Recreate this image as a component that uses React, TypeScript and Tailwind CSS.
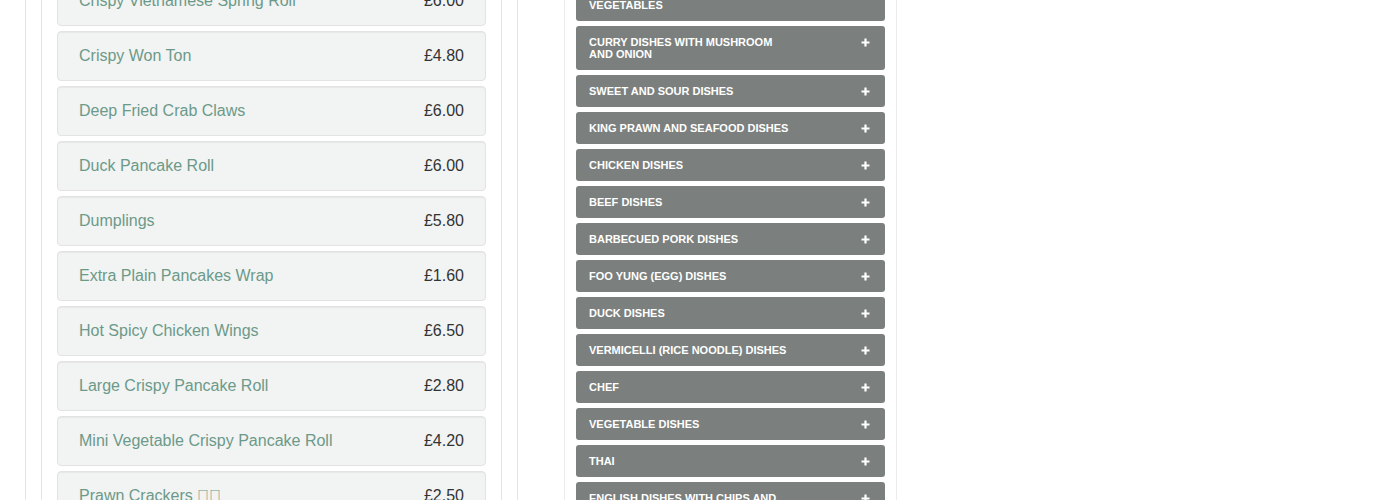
import React from "react";

const items: [string, string][] = [
  ["Crispy Vietnamese Spring Roll", "£6.00"],
  ["Crispy Won Ton", "£4.80"],
  ["Deep Fried Crab Claws", "£6.00"],
  ["Duck Pancake Roll", "£6.00"],
  ["Dumplings", "£5.80"],
  ["Extra Plain Pancakes Wrap", "£1.60"],
  ["Hot Spicy Chicken Wings", "£6.50"],
  ["Large Crispy Pancake Roll", "£2.80"],
  ["Mini Vegetable Crispy Pancake Roll", "£4.20"],
  ["Prawn Crackers \u{E000}\u{E001}", "£2.50"],
];

const cats: string[] = [
  "CURRY DISHES WITH MIXED VEGETABLES",
  "CURRY DISHES WITH MUSHROOM AND ONION",
  "SWEET AND SOUR DISHES",
  "KING PRAWN AND SEAFOOD DISHES",
  "CHICKEN DISHES",
  "BEEF DISHES",
  "BARBECUED PORK DISHES",
  "FOO YUNG (EGG) DISHES",
  "DUCK DISHES",
  "VERMICELLI (RICE NOODLE) DISHES",
  "CHEF",
  "VEGETABLE DISHES",
  "THAI",
  "ENGLISH DISHES WITH CHIPS AND SALAD",
];

function Plus() {
  return (
    <svg width="9" height="9" viewBox="0 0 9 9" className="shrink-0">
      <path d="M4.5 0.5v8M0.5 4.5h8" stroke="#ffffff" strokeWidth="2.2" />
    </svg>
  );
}

export default function App() {
  return (
    <div className="h-[500px] overflow-hidden bg-white font-['Liberation_Sans',Arial,sans-serif]">
      <div className="flex h-full items-stretch">
        <div className="ml-[25px] flex w-[493px] flex-col border-x border-[#e4e4e4] px-[15px]">
          <div className="flex flex-1 flex-col border-x border-[#e4e4e4] px-[15px]">
            <div className="mt-[-24px] flex flex-col gap-[5px]">
              {items.map(([n, p]) => (
                <div
                  key={n}
                  className="flex h-[50px] shrink-0 items-center justify-between rounded-[4px] border border-[#e3e3e3] bg-[#f2f3f3] px-[21px] text-[16px] shadow-[inset_0_1px_1px_rgba(0,0,0,0.05)]"
                >
                  <span className="text-[#6c9a89]">{n}</span>
                  <span className="text-[#333333]">{p}</span>
                </div>
              ))}
            </div>
          </div>
        </div>
        <div className="ml-[46px] flex w-[333px] flex-col border-x border-[#ececec] px-[11px]">
          <div className="mt-[-23px] flex flex-col gap-[5px]">
            {cats.map((c) => (
              <div
                key={c}
                className="flex shrink-0 items-start justify-between rounded-[3px] bg-[#7b7f7e] py-[10px] pl-[13px] pr-[15px] text-[11px] font-bold leading-[12px] text-white"
              >
                <span className="max-w-[203px]">{c}</span>
                <span className="flex h-[12px] items-center">
                  <Plus />
                </span>
              </div>
            ))}
          </div>
        </div>
      </div>
    </div>
  );
}
